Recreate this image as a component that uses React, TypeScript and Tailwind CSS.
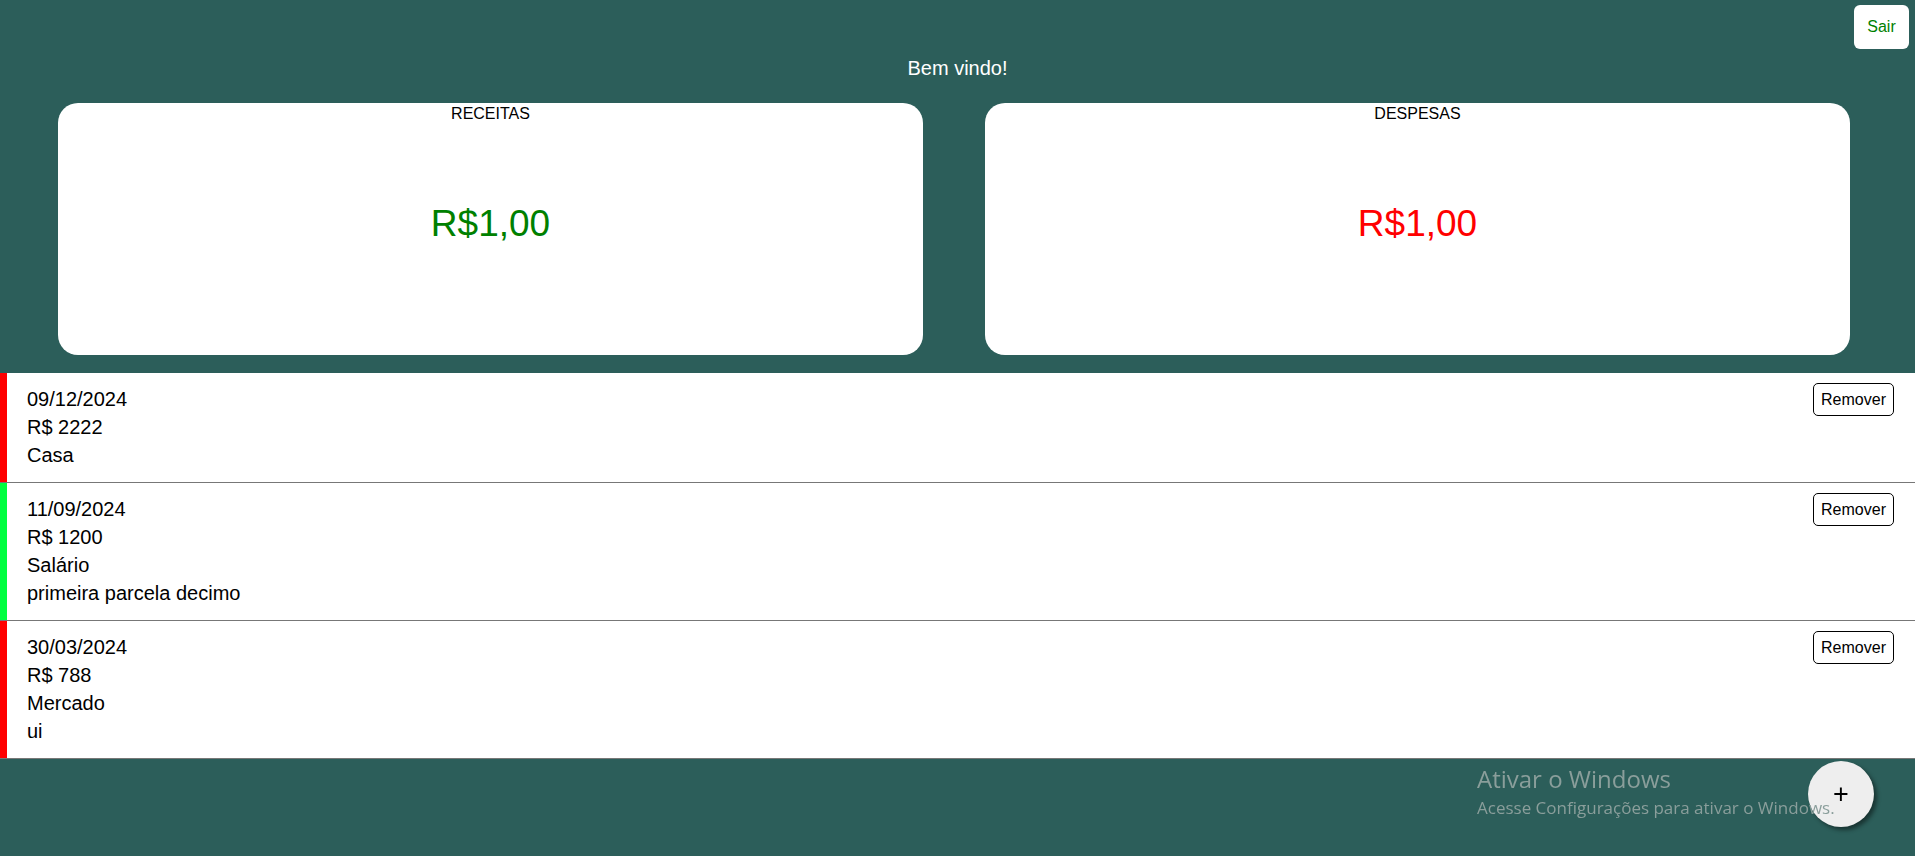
import React from "react";

type Item = {
  date: string;
  value: string;
  category: string;
  desc?: string;
  kind: "in" | "out";
};

const items: Item[] = [
  { date: "09/12/2024", value: "R$ 2222", category: "Casa", kind: "out" },
  { date: "11/09/2024", value: "R$ 1200", category: "Salário", desc: "primeira parcela decimo", kind: "in" },
  { date: "30/03/2024", value: "R$ 788", category: "Mercado", desc: "ui", kind: "out" },
];

function Card({ title, value, color }: { title: string; value: string; color: string }) {
  return (
    <div className="flex-1 h-[252px] bg-white rounded-[20px] flex flex-col items-center">
      <div className="text-[16px] leading-[18px] pt-[2px] text-black">{title}</div>
      <div className={`mt-[80px] text-[37px] leading-[42px] ${color}`}>{value}</div>
    </div>
  );
}

export default function App() {
  return (
    <div className="relative min-h-screen bg-[#2c5e5a] font-['Liberation_Sans',Arial,sans-serif] text-black overflow-hidden">
      <div className="flex justify-end pt-[5px] pr-[6px]">
        <button className="w-[55px] h-[44px] bg-white rounded-[6px] text-[16px] text-[#008000]">
          Sair
        </button>
      </div>
      <div className="mt-[8px] text-center text-white text-[20px] leading-[23px]">Bem vindo!</div>
      <div className="mt-[23px] flex gap-[62px] pl-[58px] pr-[65px]">
        <Card title="RECEITAS" value="R$1,00" color="text-[#008000]" />
        <Card title="DESPESAS" value="R$1,00" color="text-[#ff0000]" />
      </div>
      <div className="mt-[18px]">
        {items.map((it, i) => (
          <div key={i} className="flex bg-white border-b border-[#777777]">
            <div className={`w-[7px] shrink-0 ${it.kind === "in" ? "bg-[#00ff40]" : "bg-[#ff0000]"}`} />
            <div className="flex-1 pl-[20px] pt-[12px] pb-[13px] text-[20px] leading-[28px]">
              <div>{it.date}</div>
              <div>{it.value}</div>
              <div>{it.category}</div>
              {it.desc && <div>{it.desc}</div>}
            </div>
            <div className="pt-[10px] pr-[21px]">
              <button className="w-[81px] h-[33px] border border-black rounded-[5px] bg-white text-[16px] leading-[18px]">
                Remover
              </button>
            </div>
          </div>
        ))}
      </div>
      <button className="fixed right-[41px] bottom-[29px] w-[66px] h-[66px] rounded-full bg-[#eeeeee] shadow-[3px_3px_4px_rgba(0,0,0,0.45)] text-[27px] leading-none text-black flex items-center justify-center">
        +
      </button>
      <div className="fixed left-[1477px] top-[763px] z-10 pointer-events-none font-['Open_Sans',sans-serif] text-[#8a9e9b]">
        <div className="text-[24px] leading-[32px]">Ativar o Windows</div>
        <div className="text-[17px] leading-[22px] mt-[2px]">Acesse Configurações para ativar o Windows.</div>
      </div>
    </div>
  );
}
